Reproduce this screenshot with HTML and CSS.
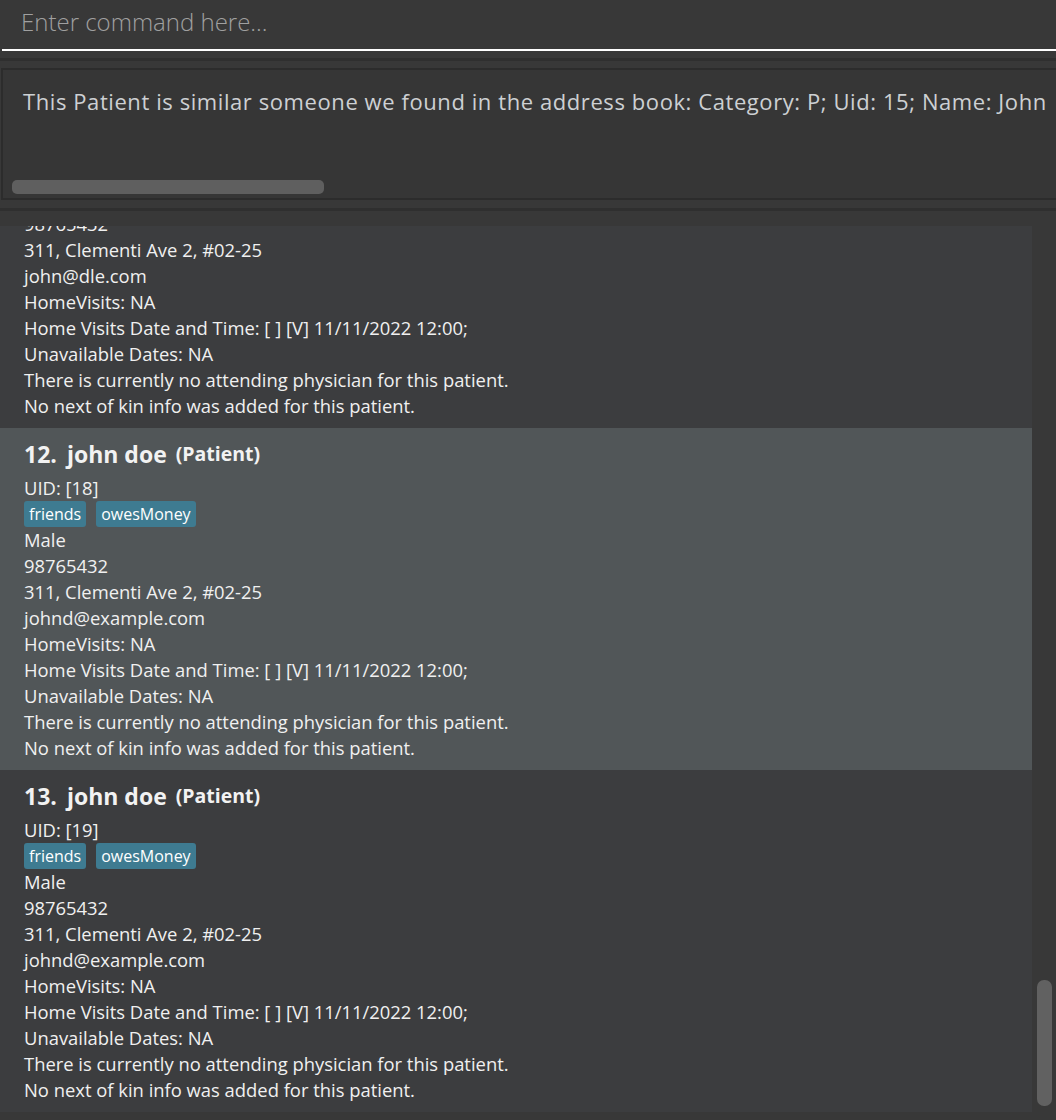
FILE: index.html
```html
<!DOCTYPE html>
<html>
<head>
<meta charset="utf-8">
<link rel="stylesheet" href="styles.css">
</head>
<body>
<div class="app">
  <div class="command-box">
    <div class="command-input">Enter command here...</div>
  </div>
  <div class="divider"></div>
  <div class="result-pane">
    <div class="result-box">
      <p class="result-text">This Patient is similar someone we found in the address book: Category: P; Uid: 15; Name: John</p>
      <div class="h-thumb"></div>
    </div>
  </div>
  <div class="divider second"></div>
  <div class="list-pane">
    <div class="list-view">
      <div class="list-inner">
        <div class="card">
          <div class="title"><span class="idx">11.</span><span class="name">john doe</span><span class="cat">(Patient)</span></div>
          <div class="line">UID: [17]</div>
          <div class="tags"><span class="tag">friends</span><span class="tag">owesMoney</span></div>
          <div class="line">Male</div>
          <div class="line">98765432</div>
          <div class="line">311, Clementi Ave 2, #02-25</div>
          <div class="line">john@dle.com</div>
          <div class="line">HomeVisits: NA</div>
          <div class="line">Home Visits Date and Time: [ ] [V] 11/11/2022 12:00;</div>
          <div class="line">Unavailable Dates: NA</div>
          <div class="line">There is currently no attending physician for this patient.</div>
          <div class="line">No next of kin info was added for this patient.</div>
        </div>
        <div class="card selected">
          <div class="title"><span class="idx">12.</span><span class="name">john doe</span><span class="cat">(Patient)</span></div>
          <div class="line">UID: [18]</div>
          <div class="tags"><span class="tag">friends</span><span class="tag">owesMoney</span></div>
          <div class="line">Male</div>
          <div class="line">98765432</div>
          <div class="line">311, Clementi Ave 2, #02-25</div>
          <div class="line">johnd@example.com</div>
          <div class="line">HomeVisits: NA</div>
          <div class="line">Home Visits Date and Time: [ ] [V] 11/11/2022 12:00;</div>
          <div class="line">Unavailable Dates: NA</div>
          <div class="line">There is currently no attending physician for this patient.</div>
          <div class="line">No next of kin info was added for this patient.</div>
        </div>
        <div class="card">
          <div class="title"><span class="idx">13.</span><span class="name">john doe</span><span class="cat">(Patient)</span></div>
          <div class="line">UID: [19]</div>
          <div class="tags"><span class="tag">friends</span><span class="tag">owesMoney</span></div>
          <div class="line">Male</div>
          <div class="line">98765432</div>
          <div class="line">311, Clementi Ave 2, #02-25</div>
          <div class="line">johnd@example.com</div>
          <div class="line">HomeVisits: NA</div>
          <div class="line">Home Visits Date and Time: [ ] [V] 11/11/2022 12:00;</div>
          <div class="line">Unavailable Dates: NA</div>
          <div class="line">There is currently no attending physician for this patient.</div>
          <div class="line">No next of kin info was added for this patient.</div>
        </div>
      </div>
    </div>
    <div class="v-scroll"><div class="v-thumb"></div></div>
  </div>
</div>
</body>
</html>
```

FILE: styles.css
```css
html, body {
  margin: 0;
  padding: 0;
  background: #383838;
  overflow: hidden;
}
.app {
  width: 1056px;
  height: 1120px;
  display: flex;
  flex-direction: column;
  font-family: "Open Sans", "Noto Sans", sans-serif;
  background: #383838;
}
.command-box {
  height: 51px;
  padding-left: 2px;
  box-sizing: border-box;
}
.command-input {
  height: 51px;
  border-bottom: 2px solid #ffffff;
  box-sizing: border-box;
  padding-left: 19px;
  line-height: 44px;
  font-size: 24px;
  font-weight: 300;
  color: #a0a0a0;
}
.divider {
  margin-top: 7px;
  height: 3px;
  background: #2f2f2f;
}
.divider.second {
  margin-top: 0;
}
.result-pane {
  padding: 7px 0 8px 1px;
}
.result-box {
  height: 132px;
  box-sizing: border-box;
  border: 2px solid #2c2c2c;
  border-right: none;
  background: #363636;
  overflow: hidden;
  padding: 16px 0 0 9px;
}
.result-text {
  margin: 0 0 64px 11px;
  white-space: nowrap;
  font-size: 22px;
  line-height: 30px;
  color: #cdd0d3;
  letter-spacing: 0.58px;
}
.h-thumb {
  width: 312px;
  height: 14px;
  border-radius: 5px;
  background: #5f5f5f;
}
.list-pane {
  margin-top: 15px;
  height: 886px;
  display: flex;
}
.list-view {
  width: 1032px;
  overflow: hidden;
  background: #3c3d3f;
}
.list-inner {
  margin-top: -140px;
}
.card {
  height: 342px;
  box-sizing: border-box;
  padding: 9px 0 9px 24px;
  color: #f0f0f0;
  font-size: 18.4px;
  letter-spacing: 0;
}
.card.selected {
  background: #515658;
}
.title {
  height: 38px;
  display: flex;
  align-items: baseline;
  color: #f2f2f2;
  font-weight: 700;
  padding-top: 1px;
  box-sizing: border-box;
}
.idx {
  font-size: 23px;
  margin-right: 10px;
}
.name {
  font-size: 23px;
  margin-right: 9px;
}
.cat {
  font-size: 19.5px;
  position: relative;
  top: -2px;
}
.line {
  height: 26px;
  line-height: 26px;
  white-space: nowrap;
}
.tags {
  height: 26px;
  display: flex;
  gap: 10px;
  align-items: center;
}
.tag {
  background: #3e7b91;
  color: #ffffff;
  border-radius: 3px;
  font-size: 16px;
  line-height: 26px;
  padding: 0 5px;
  height: 26px;
}
.v-scroll {
  width: 24px;
  background: #383838;
  position: relative;
}
.v-thumb {
  position: absolute;
  left: 5px;
  top: 754px;
  width: 15px;
  height: 126px;
  border-radius: 7px;
  background: #616161;
}
```
